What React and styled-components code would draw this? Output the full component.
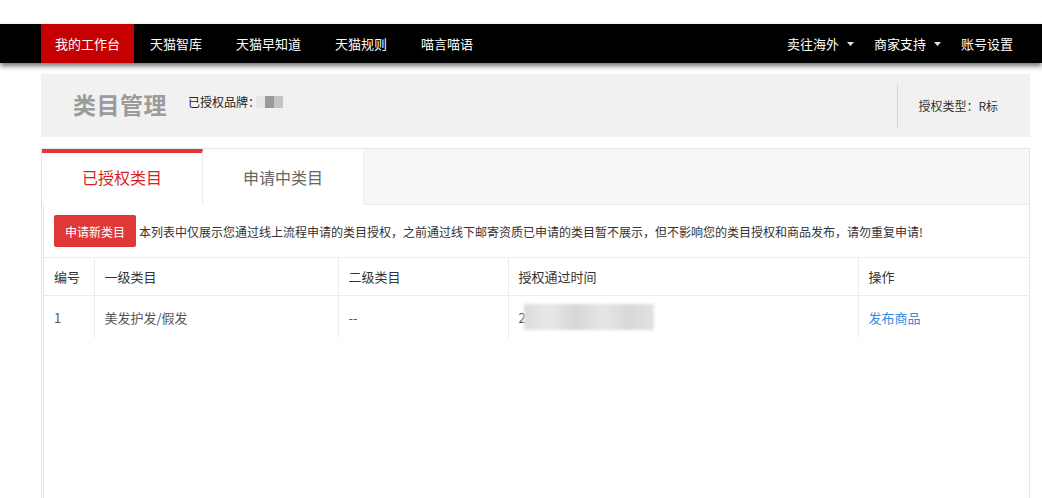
import React from 'react';
import styled, {createGlobalStyle} from "styled-components";

const GlobalStyle = createGlobalStyle`
  body {
    margin: 0;
    background: #fff;
    font-family: "Noto Sans CJK SC", "Liberation Sans", sans-serif;
    color: #333;
  }
`;

const leftNav = ['我的工作台', '天猫智库', '天猫早知道', '天猫规则', '喵言喵语']
const rightNav = [
  {label: '卖往海外', caret: true},
  {label: '商家支持', caret: true},
  {label: '账号设置', caret: false},
]

const columns = [
  {title: '编号', width: 50},
  {title: '一级类目', width: 244},
  {title: '二级类目', width: 170},
  {title: '授权通过时间', width: 350},
  {title: '操作'},
]

const Caret = () => (
  <svg width="7" height="4" viewBox="0 0 7 4">
    <path d="M0 0h7L3.5 4z" fill="#e6e6e6"/>
  </svg>
)

const App = () => {
  return (
    <>
      <GlobalStyle/>
      <Page>
        <NavBar>
          <NavGroup>
            {leftNav.map((item, i) => (
              <NavItem key={item} $active={i === 0}>{item}</NavItem>
            ))}
          </NavGroup>
          <NavGroup>
            {rightNav.map(item => (
              <NavItem key={item.label} $right>
                {item.label}
                {item.caret && <Caret/>}
              </NavItem>
            ))}
          </NavGroup>
        </NavBar>

        <Main>
          <Header>
            <HeaderLeft>
              <h2>类目管理</h2>
              <BrandLabel>
                已授权品牌：
                <Mosaic>
                  <i style={{background: '#e6e6e6'}}/>
                  <i style={{background: '#9a9a9a'}}/>
                  <i style={{background: '#c4c4c4'}}/>
                </Mosaic>
              </BrandLabel>
            </HeaderLeft>
            <HeaderRight>授权类型：R标</HeaderRight>
          </Header>

          <Panel>
            <Tabs>
              <Tab $active>已授权类目</Tab>
              <Tab>申请中类目</Tab>
            </Tabs>
            <Content>
              <Notice>
                <ApplyButton>申请新类目</ApplyButton>
                <span>本列表中仅展示您通过线上流程申请的类目授权，之前通过线下邮寄资质已申请的类目暂不展示，但不影响您的类目授权和商品发布，请勿重复申请!</span>
              </Notice>
              <Table>
                <colgroup>
                  {columns.map(c => <col key={c.title} style={c.width ? {width: c.width} : undefined}/>)}
                </colgroup>
                <thead>
                  <tr>
                    {columns.map(c => <th key={c.title}>{c.title}</th>)}
                  </tr>
                </thead>
                <tbody>
                  <tr>
                    <td>1</td>
                    <td>美发护发/假发</td>
                    <td>--</td>
                    <td>
                      <DateCell>
                        2<Blur/>
                      </DateCell>
                    </td>
                    <td><Link>发布商品</Link></td>
                  </tr>
                </tbody>
              </Table>
            </Content>
          </Panel>
        </Main>
      </Page>
    </>
  );
};

export default App;

const Page = styled.div`
  padding-top: 24px;
  height: 474px;
  overflow: hidden;
`;

const NavBar = styled.div`
  display: flex;
  justify-content: space-between;
  height: 39px;
  background: #000;
  padding: 0 19px 0 41px;
  box-shadow: 0 3px 5px rgba(0, 0, 0, 0.55);
  position: relative;
  z-index: 1;
`;

const NavGroup = styled.div`
  display: flex;
`;

const NavItem = styled.div`
  display: flex;
  align-items: center;
  gap: 8px;
  padding: 0 ${p => p.$active ? 14 : p.$right ? 10 : 16}px;
  margin-right: ${p => p.$active || p.$right ? 0 : 2}px;
  background: ${p => p.$active ? '#c60000' : 'transparent'};
  color: #fff;
  font-size: 13px;
  line-height: 39px;
`;

const Main = styled.div`
  margin: 11px 12px 0 41px;
`;

const Header = styled.div`
  display: flex;
  justify-content: space-between;
  align-items: center;
  height: 63px;
  background: #f1f1f1;
`;

const HeaderLeft = styled.div`
  display: flex;
  align-items: center;
  padding-left: 32px;

  > h2 {
    margin: 0 21px 0 0;
    font-size: 23px;
    font-weight: bold;
    color: #9b9b9b;
    letter-spacing: 0.5px;
    padding-bottom: 4px;
  }
`;

const BrandLabel = styled.div`
  display: flex;
  align-items: center;
  font-size: 12px;
  color: #222;
  margin-top: -8px;
`;

const Mosaic = styled.span`
  display: flex;
  margin-left: -4px;
  filter: blur(0.4px);

  > i {
    display: block;
    width: 9px;
    height: 12px;
  }
`;

const HeaderRight = styled.div`
  display: flex;
  align-items: center;
  height: 44px;
  padding: 0 32px 0 20px;
  border-left: 1px solid #d4d4d4;
  font-size: 12px;
  color: #333;
`;

const Panel = styled.div`
  margin-top: 11px;
  border: 1px solid #e6e6e6;
  background: #fff;
  min-height: 400px;
`;

const Tabs = styled.div`
  display: flex;
  height: 55px;
  background: #f7f7f7;
  border-bottom: 1px solid #ececec;
`;

const Tab = styled.div`
  width: 161px;
  display: flex;
  align-items: center;
  justify-content: center;
  background: #fff;
  border-top: 4px solid ${p => p.$active ? '#e23838' : '#fff'};
  border-right: 1px solid #ececec;
  font-size: 16px;
  color: ${p => p.$active ? '#d91f1f' : '#666'};
  padding-bottom: 4px;
  box-sizing: border-box;
  margin-bottom: -1px;
`;

const Content = styled.div`
  margin: 0 1px;
  border-left: 1px solid #e4e4e4;
  min-height: 340px;
`;

const Notice = styled.div`
  display: flex;
  align-items: center;
  gap: 3px;
  padding: 10px 11px 10px 10px;
  font-size: 12px;
  color: #333;
`;

const ApplyButton = styled.button`
  height: 32px;
  width: 82px;
  border: none;
  border-radius: 2px;
  background: #e03737;
  color: #fff;
  font-family: inherit;
  font-size: 12px;
  flex-shrink: 0;
`;

const Table = styled.table`
  width: 100%;
  border-collapse: collapse;
  table-layout: fixed;
  font-size: 13px;

  th, td {
    text-align: left;
    padding: 0 10px;
    border-left: 1px solid #ececec;
  }

  th:first-child, td:first-child {
    border-left: none;
  }

  th {
    height: 37px;
    font-weight: normal;
    color: #333;
    border-top: 1px solid #ececec;
    border-bottom: 1px solid #ececec;
  }

  td {
    height: 42px;
    color: #555;
  }
`;

const DateCell = styled.div`
  display: flex;
  align-items: center;
  color: #555;
`;

const Blur = styled.span`
  display: block;
  width: 130px;
  height: 26px;
  margin-left: -2px;
  background: linear-gradient(90deg, #dcdcdc, #e8e8e8 20%, #d6d6d6 40%, #e6e6e6 60%, #d8d8d8 80%, #e2e2e2);
  filter: blur(1.5px);
`;

const Link = styled.a`
  color: #2d8de0;
  cursor: pointer;
`;
